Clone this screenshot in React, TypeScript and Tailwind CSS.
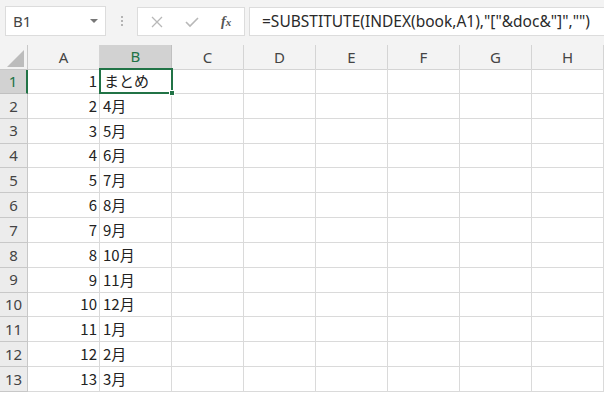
import React from "react";

const cols = ["A", "B", "C", "D", "E", "F", "G", "H"];
const months = ["まとめ", "4月", "5月", "6月", "7月", "8月", "9月", "10月", "11月", "12月", "1月", "2月", "3月"];

const jp = { fontFamily: '"Noto Sans CJK JP", "Noto Sans", sans-serif' };

export default function App() {
  return (
    <div className="w-[604px] h-[396px] overflow-hidden bg-white text-[#333]" style={jp}>
      {/* 数式バー */}
      <div className="h-[45px] bg-[#f3f3f3] flex items-start pt-[6px] pl-[5px]">
        <div className="w-[101px] h-[30px] bg-white border border-[#dcdcdc] flex items-center justify-between pl-[7px] pr-[7px]">
          <span className="text-[15px] text-[#444]" style={{ fontFamily: '"Noto Sans", sans-serif' }}>B1</span>
          <span className="w-0 h-0 border-l-[4px] border-r-[4px] border-t-[4px] border-l-transparent border-r-transparent border-t-[#777]" />
        </div>
        <div className="w-[31px] h-[30px] flex flex-col items-center justify-center gap-[2px]">
          <span className="w-[2px] h-[2px] bg-[#b4b4b4]" />
          <span className="w-[2px] h-[2px] bg-[#b4b4b4]" />
          <span className="w-[2px] h-[2px] bg-[#b4b4b4]" />
        </div>
        <div className="w-[108px] h-[29px] mt-[1px] bg-white border border-[#dcdcdc] flex items-center">
          <svg width="12" height="12" viewBox="0 0 12 12" className="ml-[13px]">
            <path d="M1 1 L11 11 M11 1 L1 11" stroke="#b8b8b8" strokeWidth="1.3" fill="none" />
          </svg>
          <svg width="14" height="12" viewBox="0 0 14 12" className="ml-[22px]">
            <path d="M1 6 L5 10 L13 2" stroke="#b8b8b8" strokeWidth="1.6" fill="none" />
          </svg>
          <span className="ml-[22px] text-[14px] italic font-bold text-[#555]" style={{ fontFamily: '"Liberation Serif", serif' }}>
            f<span className="text-[11px]">x</span>
          </span>
        </div>
        <div className="ml-[4px] flex-1 h-[29px] mt-[1px] bg-white border border-[#dcdcdc] border-r-0 flex items-center pl-[12px]">
          <span className="text-[15.5px] text-[#2a2a2a] whitespace-nowrap" style={{ fontFamily: '"Noto Sans", sans-serif' }}>
            =SUBSTITUTE(INDEX(book,A1),"["&amp;doc&amp;"]","")
          </span>
        </div>
      </div>

      {/* 列見出し */}
      <div className="grid grid-cols-[28px_repeat(8,72px)] h-[24px] bg-[#f3f3f3]">
        <div className="relative border-r border-b border-[#c8c8c8]">
          <svg width="17" height="17" viewBox="0 0 17 17" className="absolute right-[3px] bottom-[2px]">
            <path d="M17 0 L17 17 L0 17 Z" fill="#bcbcbc" />
          </svg>
        </div>
        {cols.map((c) => (
          <div
            key={c}
            className={
              c === "B"
                ? "flex items-center justify-center bg-[#d2d2d2] border-r border-[#c0c0c0] border-b-2 border-b-[#217346] text-[#217346] text-[15px]"
                : "flex items-center justify-center border-r border-b border-[#d4d4d4] text-[#444] text-[15px]"
            }
            style={{ fontFamily: '"Noto Sans", sans-serif' }}
          >
            {c}
          </div>
        ))}
      </div>

      {/* セル */}
      {months.map((m, i) => (
        <div key={i} className="grid grid-cols-[28px_repeat(8,72px)] h-[24.85px]">
          <div
            className={
              i === 0
                ? "flex items-center justify-center bg-[#d2d2d2] border-r-2 border-r-[#217346] border-b border-b-[#c0c0c0] text-[#217346] text-[15px]"
                : "flex items-center justify-center bg-[#ececec] border-r border-b border-[#c8c8c8] text-[#444] text-[15px]"
            }
            style={{ fontFamily: '"Noto Sans", sans-serif' }}
          >
            {i + 1}
          </div>
          <div className="flex items-end justify-end pr-[2px] pb-[2px] border-r border-b border-[#dadada] text-[15px] text-[#222] leading-[20px]">
            {i + 1}
          </div>
          <div
            className={
              i === 0
                ? "relative flex items-end pl-[3px] pb-[1px] -ml-[1px] -mt-[1px] w-[74px] border-2 border-[#217346] text-[15px] text-[#222] leading-[20px]"
                : "flex items-end pl-[3px] pb-[2px] border-r border-b border-[#dadada] text-[15px] text-[#222] leading-[20px]"
            }
          >
            {m}
            {i === 0 && (
              <span className="absolute -right-[4px] -bottom-[4px] w-[6px] h-[6px] bg-[#217346] border border-white" />
            )}
          </div>
          {cols.slice(2).map((c) => (
            <div key={c} className="border-r border-b border-[#dadada]" />
          ))}
        </div>
      ))}
    </div>
  );
}
